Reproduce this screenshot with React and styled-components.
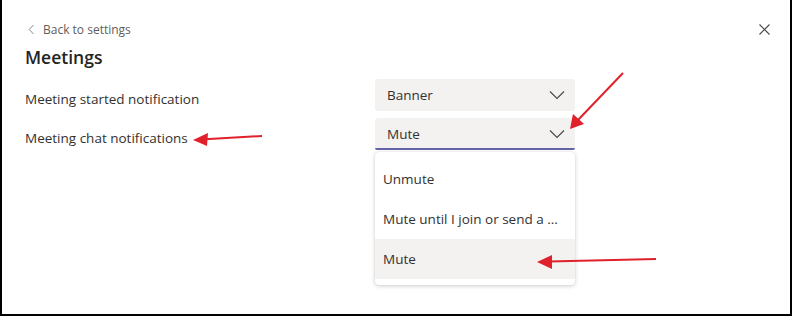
import React from "react";
import styled, { createGlobalStyle } from "styled-components";

const Global = createGlobalStyle`
  html, body { margin: 0; padding: 0; background: #fff; }
  body { font-family: "Segoe UI", "Open Sans", "Noto Sans", sans-serif; color: #252423; }
  * { box-sizing: border-box; }
`;

const Frame = styled.div`
  position: relative;
  width: 792px;
  height: 316px;
  background: #fff;
  border-left: 2px solid #000;
  border-right: 2px solid #000;
  border-bottom: 2px solid #000;
  overflow: hidden;
`;

const Content = styled.div`
  display: flex;
  flex-direction: column;
  padding: 20px 0 0 23px;
`;

const TopBar = styled.div`
  display: flex;
  align-items: center;
  justify-content: space-between;
  padding-right: 20px;
  height: 18px;
`;

const BackLink = styled.div`
  display: flex;
  align-items: center;
  gap: 8px;
  font-size: 12px;
  color: #605e5c;
  padding-left: 3px;
`;

const Title = styled.h1`
  margin: 7px 0 0 0;
  font-size: 17.5px;
  font-weight: 600;
  color: #252423;
  line-height: 24px;
`;

const Row = styled.div`
  display: flex;
  align-items: flex-start;
  margin-top: ${(p) => p.$mt}px;
`;

const Label = styled.div`
  width: 350px;
  padding-top: 4px;
  font-size: 13.5px;
  line-height: 32px;
  color: #323130;
`;

const SelectCol = styled.div`
  display: flex;
  flex-direction: column;
  width: 200px;
`;

const Select = styled.div`
  display: flex;
  align-items: center;
  justify-content: space-between;
  height: 32px;
  padding: 0 10px 0 12px;
  background: #f3f2f1;
  border-radius: 3px;
  font-size: 13.5px;
  color: #323130;
  border-bottom: ${(p) => (p.$open ? "2px solid #6264a7" : "none")};
  border-bottom-left-radius: ${(p) => (p.$open ? "2px" : "3px")};
  border-bottom-right-radius: ${(p) => (p.$open ? "2px" : "3px")};
  padding-top: ${(p) => (p.$open ? "2px" : "0")};
`;

const Menu = styled.div`
  margin-top: 2px;
  display: flex;
  flex-direction: column;
  padding: 7px 0 6px 0;
  background: #fff;
  border-radius: 4px;
  box-shadow: 0 1px 4px rgba(0,0,0,0.2), 0 0 1px rgba(0,0,0,0.12);
`;

const Item = styled.div`
  height: 40px;
  display: flex;
  align-items: center;
  padding-left: 8px;
  font-size: 13.5px;
  color: #323130;
  background: ${(p) => (p.$active ? "#f3f2f1" : "transparent")};
  white-space: nowrap;
`;

const Overlay = styled.svg`
  position: absolute;
  left: -2px;
  top: 0;
  pointer-events: none;
`;

const Chevron = () => (
  <svg width="16" height="10" viewBox="0 0 16 10">
    <path d="M1 1.5 L8 8.5 L15 1.5" fill="none" stroke="#484644" strokeWidth="1.1" />
  </svg>
);

export default function App() {
  return (
    <>
      <Global />
      <Frame>
        <Content>
          <TopBar>
            <BackLink>
              <svg width="7" height="11" viewBox="0 0 7 11">
                <path d="M5.5 1 L1.2 5.5 L5.5 10" fill="none" stroke="#8a8886" strokeWidth="1" />
              </svg>
              Back to settings
            </BackLink>
            <svg width="11" height="11" viewBox="0 0 11 11">
              <path d="M0.5 0.5 L10.5 10.5 M10.5 0.5 L0.5 10.5" stroke="#484644" strokeWidth="1.1" />
            </svg>
          </TopBar>
          <Title>Meetings</Title>
          <Row $mt={10}>
            <Label>Meeting started notification</Label>
            <SelectCol>
              <Select>
                Banner
                <Chevron />
              </Select>
            </SelectCol>
          </Row>
          <Row $mt={3}>
            <Label>Meeting chat notifications</Label>
            <SelectCol>
              <Select $open>
                Mute
                <Chevron />
              </Select>
              <Menu>
                <Item>Unmute</Item>
                <Item>Mute until I join or send a ...</Item>
                <Item $active>Mute</Item>
              </Menu>
            </SelectCol>
          </Row>
        </Content>
        <Overlay width="792" height="316" viewBox="0 0 792 316">
          <g stroke="#e0212b" strokeWidth="2" fill="#e0212b">
            <line x1="262" y1="136" x2="205" y2="139.3" />
            <polygon points="193,140 208,133 207,146" stroke="none" />
            <line x1="623" y1="73" x2="578" y2="120" />
            <polygon points="570,129 573,114 584,124" stroke="none" />
            <line x1="656" y1="259" x2="549" y2="261.6" />
            <polygon points="537,262 552,255 552,269" stroke="none" />
          </g>
        </Overlay>
      </Frame>
    </>
  );
}
